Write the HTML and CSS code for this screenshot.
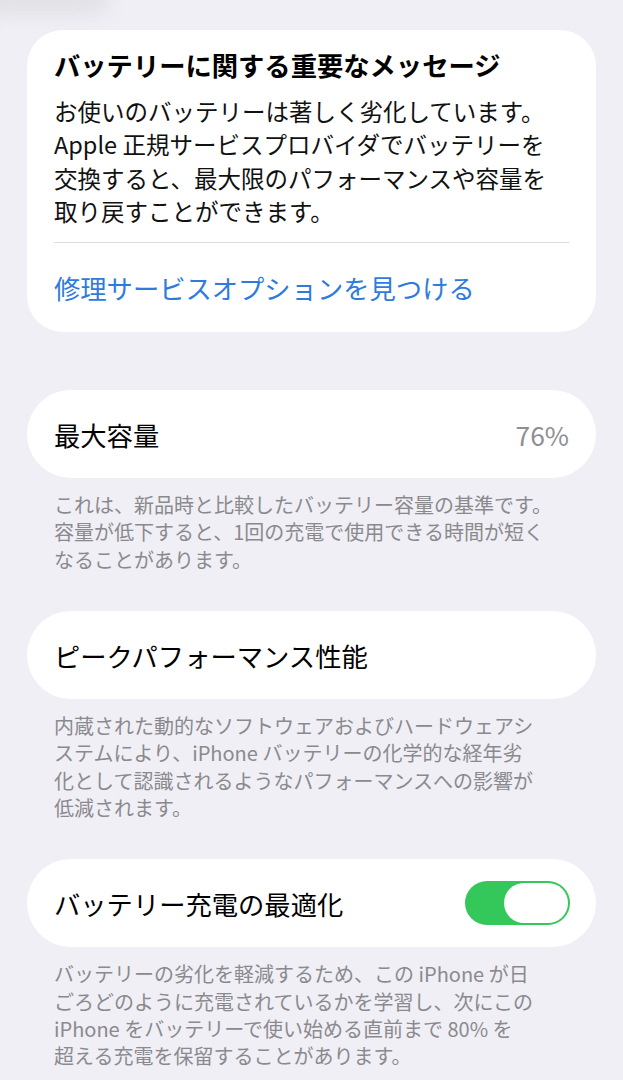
FILE: index.html
```html
<!DOCTYPE html>
<html lang="ja">
<head>
  <meta charset="utf-8">
  <title>バッテリーの状態と充電</title>
  <link rel="stylesheet" href="styles.css">
</head>
<body>
  <div class="page">
    <div class="card message">
      <h2 class="message-title">バッテリーに関する重要なメッセージ</h2>
      <p class="message-body">お使いのバッテリーは著しく劣化しています。<br>Apple 正規サービスプロバイダでバッテリーを<br>交換すると、最大限のパフォーマンスや容量を<br>取り戻すことができます。</p>
      <div class="divider"></div>
      <div class="link-row">
        <a class="link" href="#">修理サービスオプションを見つける</a>
      </div>
    </div>

    <div class="card row">
      <span class="row-label">最大容量</span>
      <span class="row-value">76%</span>
    </div>
    <p class="footer">これは、新品時と比較したバッテリー容量の基準です。<br>容量が低下すると、1回の充電で使用できる時間が短く<br>なることがあります。</p>

    <div class="card row">
      <span class="row-label">ピークパフォーマンス性能</span>
    </div>
    <p class="footer">内蔵された動的なソフトウェアおよびハードウェアシ<br>ステムにより、iPhone バッテリーの化学的な経年劣<br>化として認識されるようなパフォーマンスへの影響が<br>低減されます。</p>

    <div class="card row">
      <span class="row-label">バッテリー充電の最適化</span>
      <div class="toggle on"><div class="knob"></div></div>
    </div>
    <p class="footer">バッテリーの劣化を軽減するため、この iPhone が日<br>ごろどのように充電されているかを学習し、次にこの<br>iPhone をバッテリーで使い始める直前まで 80% を<br>超える充電を保留することがあります。</p>
  </div>
</body>
</html>
```

FILE: styles.css
```css
body {
  margin: 0;
  background: #f0eff5;
  font-family: "Noto Sans CJK JP", "Noto Sans", sans-serif;
  color: #000;
}

.page {
  position: relative;
  padding: 30px 27px 0;
  display: flex;
  flex-direction: column;
}

/* faint smudge left over from the row above, at the top edge */
.page::before {
  content: "";
  position: absolute;
  left: -20px;
  top: -20px;
  width: 130px;
  height: 36px;
  border-radius: 18px;
  background: #e2e2e7;
  filter: blur(8px);
}

.card {
  position: relative;
  background: #fff;
  border-radius: 36px;
}

/* important message card */
.message {
  padding: 0 27px;
  margin-bottom: 58px;
}

.message-title {
  margin: 0;
  padding-top: 18px;
  font-size: 26.3px;
  line-height: 34px;
  font-weight: 700;
}

.message-body {
  margin: 13px 0 0;
  font-size: 23.5px;
  line-height: 33.3px;
  color: #111;
}

.divider {
  margin-top: 14px;
  height: 1px;
  background: #dcdce0;
}

.link-row {
  height: 89px;
  display: flex;
  align-items: center;
}

.link {
  font-size: 26.3px;
  color: #2f7bdc;
  text-decoration: none;
}

/* rows */
.row {
  height: 88px;
  border-radius: 44px;
  padding: 0 27px;
  display: flex;
  align-items: center;
  justify-content: space-between;
}

.row-label {
  font-size: 26.3px;
}

.row-value {
  font-size: 26.3px;
  color: #8e8e93;
}

.footer {
  margin: 13px 27px 38px;
  font-size: 20px;
  line-height: 27.3px;
  color: #8a8a8e;
}

/* switch */
.toggle {
  width: 105px;
  height: 44px;
  border-radius: 22px;
  background: #e4e4e8;
  box-sizing: border-box;
  padding: 2px;
  display: flex;
  justify-content: flex-start;
  margin-right: -1px;
}

.toggle.on {
  background: #34c759;
  justify-content: flex-end;
}

.knob {
  width: 64px;
  height: 40px;
  border-radius: 20px;
  background: #fff;
}
```
